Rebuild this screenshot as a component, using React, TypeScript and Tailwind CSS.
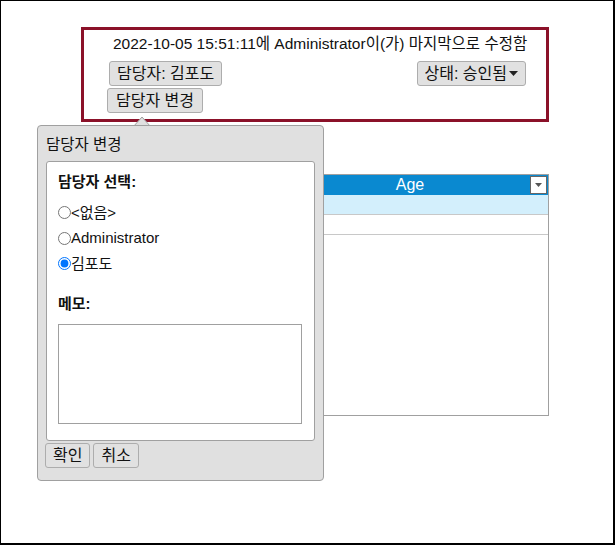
import React from "react"

const font = "font-['Liberation_Sans','Noto_Sans_CJK_KR',sans-serif]"

function Btn({ children, className = "" }: { children: React.ReactNode; className?: string }) {
  return (
    <button
      className={`h-[25px] rounded-[3px] border border-[#adadad] bg-[#e1e1e1] px-[7px] text-[16px] leading-none text-[#111] ${className}`}
    >
      {children}
    </button>
  )
}

function Radio({ label, checked }: { label: string; checked?: boolean }) {
  return (
    <label className="flex h-[25.5px] items-center text-[15px] text-[#111]">
      <input type="radio" name="owner" defaultChecked={checked} className="m-0 h-[13px] w-[13px]" />
      <span>{label}</span>
    </label>
  )
}

export default function App() {
  return (
    <div className={`relative h-[545px] w-[615px] overflow-hidden border-l border-t border-r-2 border-b-2 border-black bg-white ${font}`}>
      {/* header box */}
      <div className="ml-[80px] mt-[26px] h-[95px] w-[468px] border-[3px] border-[#8b1129]">
        <div className="pl-[29px] pr-[18px] pt-[4px]">
          <div className="h-[20px] whitespace-nowrap text-[15.5px] leading-[20px] text-[#111]">
            2022-10-05 15:51:11에 Administrator이(가) 마지막으로 수정함
          </div>
          <div className="mt-[7px] flex justify-between pr-[2px]">
            <Btn className="-ml-[4px]">담당자: 김포도</Btn>
            <Btn className="flex items-center gap-[2px]">
              상태: 승인됨
              <svg width="9" height="5" viewBox="0 0 9 5">
                <path d="M0 0h9L4.5 5z" fill="#222" />
              </svg>
            </Btn>
          </div>
          <div className="mt-[2px]">
            <Btn className="-ml-[6px] px-[8px]">담당자 변경</Btn>
          </div>
        </div>
      </div>

      {/* grid behind popover */}
      <div className="ml-[80px] mt-[52px] flex h-[242px] w-[468px] flex-col border border-[#a0a0a0]">
        <div className="flex h-[20px] bg-[#0a89d0]">
          <div className="w-[190px]" />
          <div className="relative flex flex-1 items-center justify-center leading-none text-white">
            <span className="text-[16px]">Age</span>
            <div className="absolute right-[1px] top-[1px] flex h-[18px] w-[17px] items-center justify-center border border-[#666] bg-white">
              <svg width="7" height="4" viewBox="0 0 7 4">
                <path d="M0 0h7L3.5 4z" fill="#555" />
              </svg>
            </div>
          </div>
        </div>
        <div className="h-[20px] border-b border-[#c8c8c8] bg-[#d3effc]" />
        <div className="h-[20px] border-b border-[#c8c8c8] bg-white" />
      </div>

      {/* popover arrow */}
      <svg className="absolute left-[131px] top-[114px]" width="20" height="12" viewBox="0 0 20 12">
        <path d="M1 12L10 2l9 10z" fill="#e0e0e0" stroke="#a0a0a0" />
        <path d="M0 12h20" stroke="#e0e0e0" strokeWidth="2" />
      </svg>

      {/* popover */}
      <div className="absolute left-[36px] top-[124px] flex h-[356px] w-[287px] flex-col rounded-[4px] border border-[#a0a0a0] bg-[#e0e0e0] px-[8px] pb-[9px]">
        <div className="pt-[8px] text-[15.5px] leading-[22px] text-[#111]">담당자 변경</div>
        <div className="mt-[5px] flex h-[280px] flex-col rounded-[3px] border border-[#a0a0a0] bg-white pl-[11px]">
          <div className="mt-[9px] text-[15px] font-bold leading-[22px] text-[#111]">담당자 선택:</div>
          <div className="mt-[7px] flex flex-col">
            <Radio label="<없음>" />
            <Radio label="Administrator" />
            <Radio label="김포도" checked />
          </div>
          <div className="mt-[16px] text-[15px] font-bold leading-[22px] text-[#111]">메모:</div>
          <textarea className="mt-[9px] h-[100px] w-[244px] resize-none border border-[#a0a0a0] outline-none" />
        </div>
        <div className="mt-[2px] flex gap-[3px] -ml-[1px]">
          <Btn className="px-[7px]">확인</Btn>
          <Btn className="px-[7px]">취소</Btn>
        </div>
      </div>
    </div>
  )
}
